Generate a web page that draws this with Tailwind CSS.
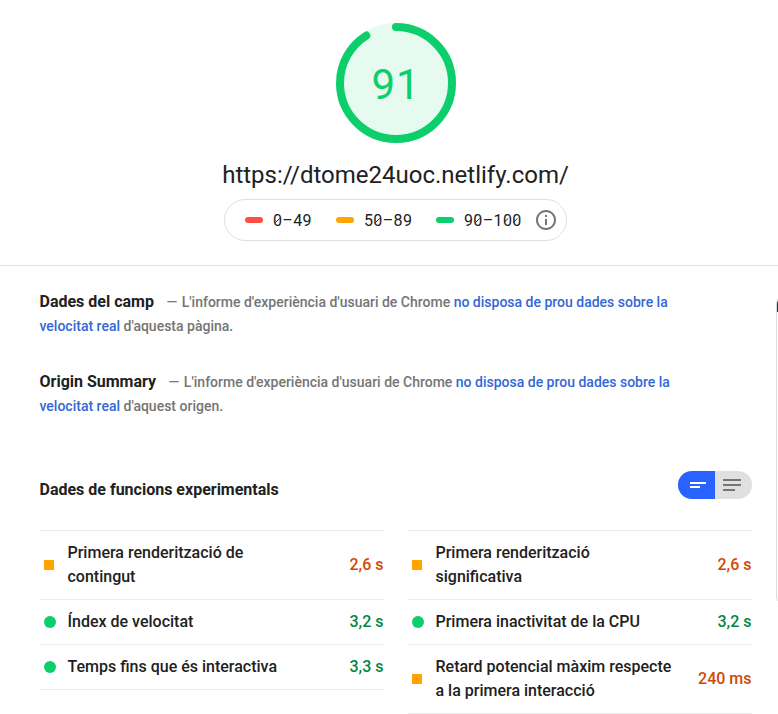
<!DOCTYPE html>
<html lang="ca">
<head>
<meta charset="utf-8">
<title>PageSpeed Insights</title>
<script src="https://cdn.jsdelivr.net/npm/@tailwindcss/browser@4"></script>
</head>
<body class="relative h-[714px] w-[778px] overflow-hidden bg-white font-['Roboto',sans-serif] text-[#212121]">
  <header class="flex h-[266px] flex-col items-center border-b border-[#e0e0e0] pr-0 pt-[23px]">
    <div class="ml-[14px] grid size-[120px] place-items-center">
      <svg class="col-start-1 row-start-1" width="120" height="120" viewBox="0 0 120 120" fill="none">
        <circle cx="60" cy="60" r="60" fill="#e6faf0"/>
        <circle cx="60" cy="60" r="56" stroke="#0cce6b" stroke-width="8" stroke-linecap="round" pathLength="100" stroke-dasharray="91.1 100" transform="rotate(-90 60 60)"/>
      </svg>
      <span class="col-start-1 row-start-1 pt-[4px] text-[42px] leading-none tracking-[1px] text-[#0cce6b]">91</span>
    </div>
    <h1 class="ml-[13px] mt-[14px] text-[24px] leading-9 whitespace-nowrap">https://dtome24uoc.netlify.com/</h1>
    <div class="ml-[13px] mt-[6px] flex h-[42px] w-[343px] items-center rounded-full border border-[#e0e0e0] pl-5 text-base tracking-[0.35px]">
      <i class="h-[6px] w-[18px] rounded-full bg-[#ff4e42]"></i>
      <span class="relative ml-[10px] w-[39px] whitespace-nowrap pt-[2px]">0–49<svg class="absolute left-0 top-[7px]" width="9" height="12" viewBox="0 0 9 12" fill="none" stroke="#212121"><path d="M2.4 8.6 6.7 4.4"/></svg></span>
      <i class="ml-6 h-[6px] w-[18px] rounded-full bg-[#ffa400]"></i>
      <span class="relative ml-[10px] w-[48px] whitespace-nowrap pt-[2px]">50–89<svg class="absolute left-[9.4px] top-[7px]" width="9" height="12" viewBox="0 0 9 12" fill="none" stroke="#212121"><path d="M2.4 8.6 6.7 4.4"/></svg></span>
      <i class="ml-6 h-[6px] w-[18px] rounded-full bg-[#0cce6b]"></i>
      <span class="relative ml-[10px] w-[58px] whitespace-nowrap pt-[2px]">90–100<svg class="absolute left-[9.4px] top-[7px]" width="48" height="12" viewBox="0 0 48 12" fill="none" stroke="#212121"><path d="M2.4 8.6 6.7 4.4M30.9 8.6 35.2 4.4M40.2 8.6 44.5 4.4"/></svg></span>
      <svg class="ml-[12px]" width="24" height="24" viewBox="0 0 24 24" fill="#757575"><path d="M11 17h2v-6h-2v6zm1-15C6.48 2 2 6.48 2 12s4.48 10 10 10 10-4.48 10-10S17.52 2 12 2zm0 18c-4.41 0-8-3.59-8-8s3.59-8 8-8 8 3.59 8 8-3.59 8-8 8zM11 9h2V7h-2v2z"/></svg>
    </div>
  </header>

  <main class="pl-10 pr-[26px] pt-6">
    <p class="-ml-[0.5px] w-[680px] text-sm leading-6 font-medium text-[#757575]"><b class="mr-[12.5px] text-base leading-6 font-bold text-[#212121]">Dades del camp</b><span class="mr-px">—</span> L'informe d'experiència d'usuari de Chrome <a class="text-[#3367d6]">no disposa de prou dades sobre la<br>velocitat real</a> d'aquesta pàgina.</p>
    <p class="-ml-[0.5px] mt-8 w-[680px] text-sm leading-6 font-medium text-[#757575]"><b class="mr-[12.5px] text-base leading-6 font-bold text-[#212121]">Origin Summary</b><span class="mr-px">—</span> L'informe d'experiència d'usuari de Chrome <a class="text-[#3367d6]">no disposa de prou dades sobre la<br>velocitat real</a> d'aquest origen.</p>

    <div class="mt-[53px] flex h-7 items-start justify-between">
      <h2 class="-ml-[0.5px] pt-[7px] text-base leading-6 font-bold">Dades de funcions experimentals</h2>
      <div class="flex h-7 w-[74px] overflow-hidden rounded-full bg-[#e0e0e0]">
        <svg class="bg-[#2962ff]" width="37" height="28" fill="#fff"><path d="M12 11h16v2H12zM12 15h10v2H12z"/></svg>
        <svg width="37" height="28" fill="#757575"><path d="M8 8h18v2H8zM8 13h18v2H8zM8 18h12v2H8z"/></svg>
      </div>
    </div>

    <section class="mt-[31px] grid grid-cols-2 items-start gap-6 text-base leading-6 font-medium">
      <div class="border-t border-[#ebebeb]">
        <div class="flex items-center border-b border-[#ebebeb] py-[10px] pr-[0.5px]"><i class="ml-1 mr-[13.5px] size-[10px] bg-[#ffa400]"></i><span class="w-[240px]">Primera renderització de<br>contingut</span><span class="ml-auto whitespace-nowrap text-[#d04900]">2,6 s</span></div>
        <div class="flex items-center border-b border-[#ebebeb] py-[10px] pr-[0.5px]"><i class="ml-1 mr-[11.5px] size-3 rounded-full bg-[#0cce6b]"></i><span>Índex de velocitat</span><span class="ml-auto text-[#018642]">3,2 s</span></div>
        <div class="flex items-center border-b border-[#ebebeb] py-[10px] pr-[0.5px]"><i class="ml-1 mr-[11.5px] size-3 rounded-full bg-[#0cce6b]"></i><span>Temps fins que és interactiva</span><span class="ml-auto text-[#018642]">3,3 s</span></div>
      </div>
      <div class="border-t border-[#ebebeb]">
        <div class="flex items-center border-b border-[#ebebeb] py-[10px] pr-[0.5px]"><i class="ml-1 mr-[13.5px] size-[10px] bg-[#ffa400]"></i><span>Primera renderització<br>significativa</span><span class="ml-auto text-[#d04900]">2,6 s</span></div>
        <div class="flex items-center border-b border-[#ebebeb] py-[10px] pr-[0.5px]"><i class="ml-1 mr-[11.5px] size-3 rounded-full bg-[#0cce6b]"></i><span>Primera inactivitat de la CPU</span><span class="ml-auto text-[#018642]">3,2 s</span></div>
        <div class="flex items-center border-b border-[#ebebeb] py-[10px] pr-[0.5px]"><i class="ml-1 mr-[13.5px] size-[10px] bg-[#ffa400]"></i><span class="whitespace-nowrap">Retard potencial màxim respecte<br>a la primera interacció</span><span class="ml-auto whitespace-nowrap text-[#d04900]">240 ms</span></div>
      </div>
    </section>
  </main>

  <aside class="absolute left-[776px] top-[297px] h-[306px] w-5 rounded-md border border-[#dadce0]"><div class="h-[14px] rounded-t-md bg-[#263238]"></div></aside>
</body>
</html>
